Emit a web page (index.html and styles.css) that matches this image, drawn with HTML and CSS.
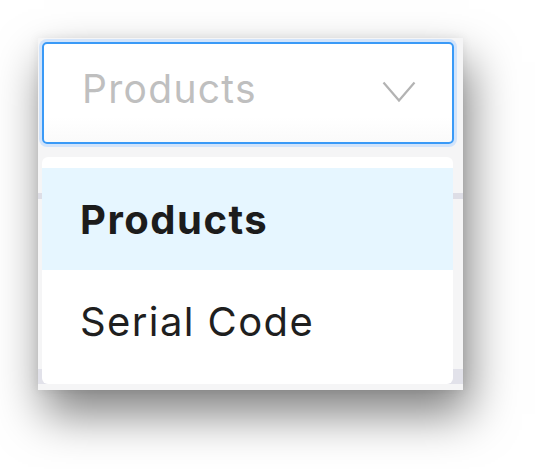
FILE: index.html
```html
<!DOCTYPE html>
<html>
<head>
<meta charset="utf-8">
<link rel="stylesheet" href="styles.css">
</head>
<body>
<div class="window">
  <div class="bg-line line-1"></div>
  <div class="bg-line line-2"></div>
  <div class="select">
    <span class="placeholder">Products</span>
    <svg class="chevron" width="34" height="22" viewBox="0 0 34 22"><path d="M1.5 1.5 L17 19.5 L32.5 1.5" fill="none" stroke="#b3b3b3" stroke-width="2.2"/></svg>
  </div>
  <ul class="menu">
    <li class="item active">Products</li>
    <li class="item">Serial Code</li>
  </ul>
</div>
</body>
</html>
```
FILE: styles.css
```css
html {
  margin: 0;
  background: #ffffff;
  height: 100%;
}
body {
  margin: 0;
  min-height: 100%;
  box-sizing: border-box;
  padding: 38px;
  font-family: Inter, "Noto Sans", sans-serif;
}
.window {
  position: relative;
  width: 425px;
  height: 352px;
  box-sizing: border-box;
  padding: 4px 9px 0 4px;
  background: #f5f5f6;
  box-shadow: 6px 24px 44px rgba(0,0,0,0.5), 0 0 10px rgba(0,0,0,0.08);
  display: flex;
  flex-direction: column;
}
.bg-line {
  position: absolute;
  left: 0;
  right: 0;
  background: #dedee6;
}
.line-1 { top: 155px; height: 6px; }
.line-2 { top: 331px; height: 15px; background: #e2e2ea; }
.select {
  position: relative;
  height: 102px;
  box-sizing: border-box;
  border: 2px solid #3a9af7;
  border-radius: 5px;
  box-shadow: 0 0 0 3px #d2e4fb;
  background: linear-gradient(#ffffff 75%, #fafafa);
  display: flex;
  align-items: center;
  justify-content: space-between;
  padding: 0 36px 0 38px;
}
.placeholder {
  font-size: 39px;
  color: #bfbfbf;
  letter-spacing: 1.3px;
  padding-bottom: 10px;
}
.chevron { display: block; margin-bottom: 2px; }
.menu {
  position: relative;
  list-style: none;
  margin: 13px 1px 0 0;
  padding: 11px 0 12px;
  background: #ffffff;
  border-radius: 6px;
}
.item {
  height: 102px;
  display: flex;
  align-items: center;
  padding-left: 38px;
  font-size: 40px;
  letter-spacing: 1.4px;
  color: #1f1f1f;
}
.item.active {
  background: #e6f6ff;
  font-weight: 700;
  color: #1c1c1c;
  letter-spacing: 1.5px;
}
```
